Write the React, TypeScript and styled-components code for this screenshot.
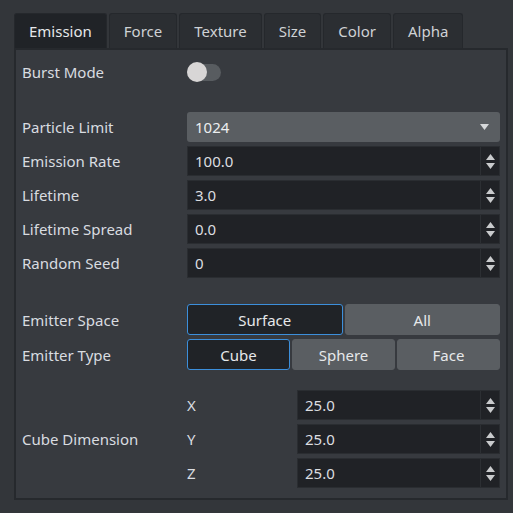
import React, { useState } from 'react';
import styled, { createGlobalStyle } from 'styled-components';

const GlobalStyle = createGlobalStyle`
  html, body {
    margin: 0;
    padding: 0;
    background: #33363a;
  }
  body {
    font-family: "Noto Sans", "Open Sans", sans-serif;
    font-size: 15px;
    color: #d9dce0;
  }
`;

const Page = styled.div`
  width: 513px;
  height: 513px;
  box-sizing: border-box;
  padding: 13px 5px 0 14px;
  background: #33363a;
`;

const TabBar = styled.div`
  display: flex;
  gap: 2px;
  height: 35px;
`;

const Tab = styled.div<{ $active?: boolean }>`
  display: flex;
  align-items: center;
  padding: 0 14px;
  box-sizing: border-box;
  height: 35px;
  border: 1px solid #25282c;
  border-bottom: none;
  border-radius: 3px 3px 0 0;
  background: ${p => (p.$active ? '#202327' : '#2b2e32')};
  color: ${p => (p.$active ? '#e6e8ea' : '#cfd2d5')};
  cursor: default;
`;

const Panel = styled.div`
  box-sizing: border-box;
  height: 452px;
  border: 2px solid #26292d;
  background: #373a3f;
  padding: 7px 6px 10px 6px;
  display: flex;
  flex-direction: column;
`;

const Group = styled.div<{ $top?: number }>`
  display: flex;
  flex-direction: column;
  gap: 4px;
  margin-top: ${p => p.$top ?? 0}px;
`;

const Row = styled.div<{ $h?: number }>`
  display: grid;
  grid-template-columns: 165px 1fr;
  align-items: center;
  height: ${p => p.$h ?? 30}px;
`;

const Label = styled.div`
  color: #d9dce0;
  white-space: nowrap;
`;

const Toggle = styled.div`
  position: relative;
  width: 34px;
  height: 20px;
  display: flex;
  align-items: center;
`;

const Track = styled.div`
  width: 34px;
  height: 17px;
  border-radius: 9px;
  background: #585c60;
`;

const Knob = styled.div`
  position: absolute;
  left: 0;
  top: 0;
  width: 20px;
  height: 20px;
  border-radius: 50%;
  background: #d8d6d6;
`;

const Select = styled.div`
  height: 30px;
  box-sizing: border-box;
  border-radius: 3px;
  background: #5a5e62;
  display: flex;
  align-items: center;
  justify-content: space-between;
  padding: 0 11px 0 8px;
  color: #eceef0;
`;

const SpinBox = styled.div`
  height: 100%;
  box-sizing: border-box;
  background: #202226;
  border: 1px solid #2a2d31;
  display: flex;
  align-items: stretch;
`;

const SpinValue = styled.div`
  flex: 1;
  display: flex;
  align-items: center;
  padding-left: 7px;
  color: #dcdee0;
`;

const SpinButtons = styled.div`
  width: 18px;
  border-left: 1px solid #2c2f33;
  display: flex;
  flex-direction: column;
  align-items: center;
  justify-content: center;
  gap: 3px;
`;

const Segmented = styled.div<{ $cols: number }>`
  display: grid;
  grid-template-columns: repeat(${p => p.$cols}, 1fr);
  gap: 2px;
  height: 100%;
`;

const SegButton = styled.div<{ $active?: boolean }>`
  box-sizing: border-box;
  display: flex;
  align-items: center;
  justify-content: center;
  border-radius: 3px;
  background: ${p => (p.$active ? '#202327' : '#5a5e62')};
  border: 1px solid ${p => (p.$active ? '#3c8fdb' : '#5a5e62')};
  color: #e6e8ea;
  cursor: default;
`;

const DimGrid = styled.div`
  display: grid;
  grid-template-columns: 165px 1fr;
  align-items: center;
  margin-top: 20px;
`;

const AxisList = styled.div`
  display: flex;
  flex-direction: column;
  gap: 4px;
`;

const AxisRow = styled.div`
  display: grid;
  grid-template-columns: 110px 1fr;
  align-items: center;
  height: 30px;
`;

const Arrow = ({ up }: { up?: boolean }) => (
  <svg width="9" height="6" viewBox="0 0 9 6">
    <path d={up ? 'M4.5 0 L9 6 L0 6 Z' : 'M0 0 L9 0 L4.5 6 Z'} fill="#c9cbcd" />
  </svg>
);

const Spin = ({ value }: { value: string }) => (
  <SpinBox>
    <SpinValue>{value}</SpinValue>
    <SpinButtons>
      <Arrow up />
      <Arrow />
    </SpinButtons>
  </SpinBox>
);

const tabs = ['Emission', 'Force', 'Texture', 'Size', 'Color', 'Alpha'];

export default function App() {
  const [tab, setTab] = useState('Emission');
  const [space, setSpace] = useState('Surface');
  const [type, setType] = useState('Cube');

  return (
    <Page>
      <GlobalStyle />
      <TabBar>
        {tabs.map(t => (
          <Tab key={t} $active={t === tab} onClick={() => setTab(t)}>{t}</Tab>
        ))}
      </TabBar>
      <Panel>
        <Row>
          <Label>Burst Mode</Label>
          <Toggle>
            <Track />
            <Knob />
          </Toggle>
        </Row>

        <Group $top={25}>
          <Row>
            <Label>Particle Limit</Label>
            <Select>
              <span>1024</span>
              <svg width="9" height="6" viewBox="0 0 9 6">
                <path d="M0 0 L9 0 L4.5 6 Z" fill="#d6d8da" />
              </svg>
            </Select>
          </Row>
          <Row>
            <Label>Emission Rate</Label>
            <Spin value="100.0" />
          </Row>
          <Row>
            <Label>Lifetime</Label>
            <Spin value="3.0" />
          </Row>
          <Row>
            <Label>Lifetime Spread</Label>
            <Spin value="0.0" />
          </Row>
          <Row>
            <Label>Random Seed</Label>
            <Spin value="0" />
          </Row>
        </Group>

        <Group $top={26}>
          <Row $h={31}>
            <Label>Emitter Space</Label>
            <Segmented $cols={2}>
              {['Surface', 'All'].map(s => (
                <SegButton key={s} $active={s === space} onClick={() => setSpace(s)}>{s}</SegButton>
              ))}
            </Segmented>
          </Row>
          <Row $h={31}>
            <Label>Emitter Type</Label>
            <Segmented $cols={3}>
              {['Cube', 'Sphere', 'Face'].map(s => (
                <SegButton key={s} $active={s === type} onClick={() => setType(s)}>{s}</SegButton>
              ))}
            </Segmented>
          </Row>
        </Group>

        <DimGrid>
          <Label>Cube Dimension</Label>
          <AxisList>
            {['X', 'Y', 'Z'].map(a => (
              <AxisRow key={a}>
                <Label>{a}</Label>
                <Spin value="25.0" />
              </AxisRow>
            ))}
          </AxisList>
        </DimGrid>
      </Panel>
    </Page>
  );
}
